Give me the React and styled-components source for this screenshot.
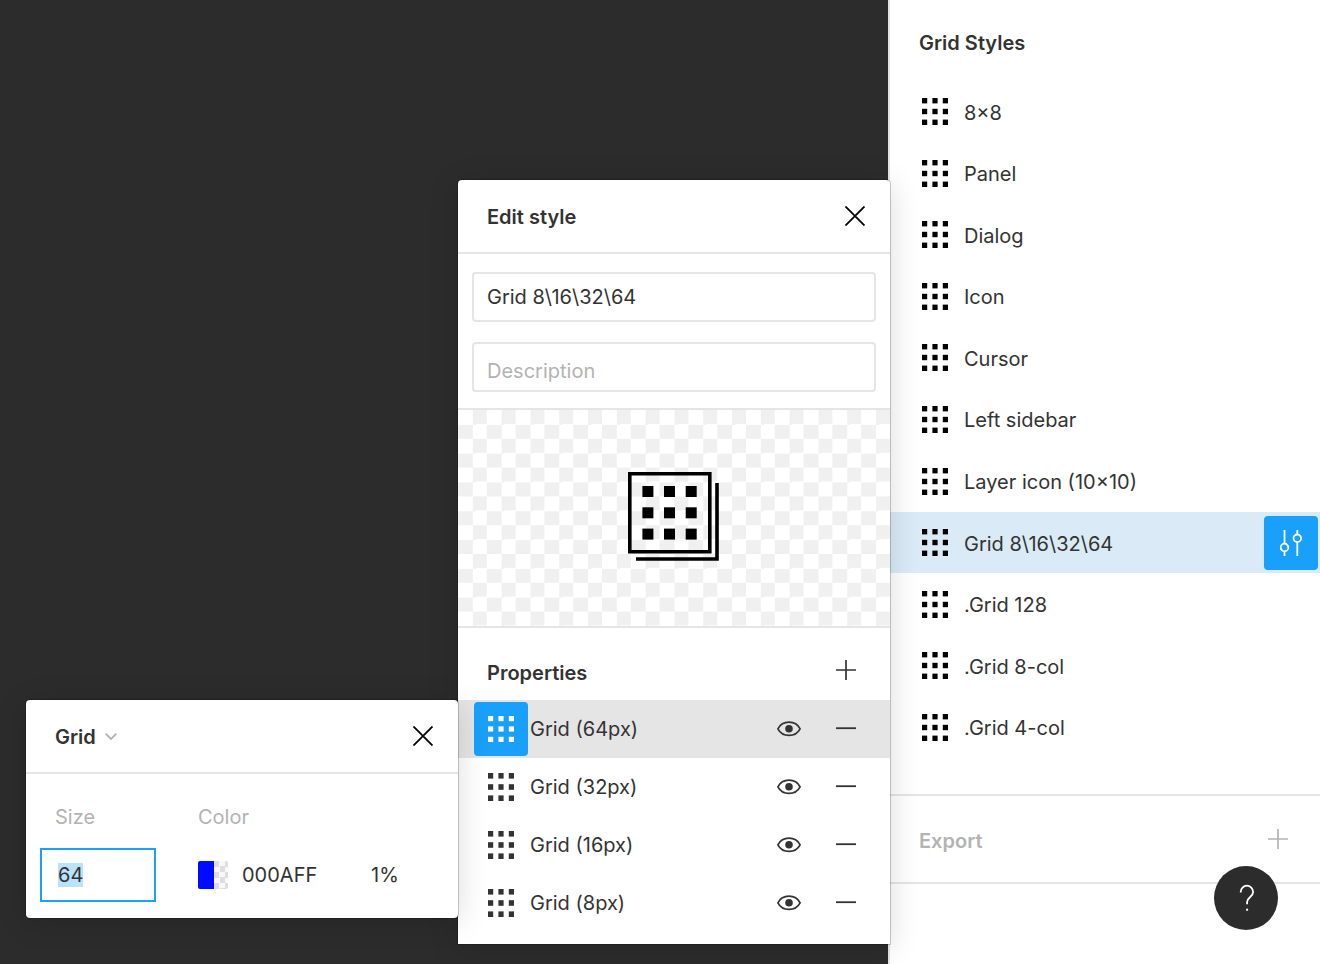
import React, { useEffect, useRef } from 'react';
import styled, { createGlobalStyle } from 'styled-components';

const gridStyles = [
  '8×8',
  'Panel',
  'Dialog',
  'Icon',
  'Cursor',
  'Left sidebar',
  'Layer icon (10×10)',
  'Grid 8\\16\\32\\64',
  '.Grid 128',
  '.Grid 8-col',
  '.Grid 4-col',
];

const properties = ['Grid (64px)', 'Grid (32px)', 'Grid (16px)', 'Grid (8px)'];

const GridIcon = ({ height = 27 }) => (
  <svg width="26" height={height} viewBox="0 0 26 26" preserveAspectRatio="none" fill="currentColor" aria-hidden="true">
    {[0, 10.4, 20.8].map(y => [0, 10.4, 20.8].map(x => (
      <rect key={`${x}-${y}`} x={x} y={y} width="5.2" height="5.2" />
    )))}
  </svg>
);

const CloseIcon = () => (
  <svg width="20" height="20" viewBox="0 0 20 20" fill="none" stroke="#000" strokeWidth="1.8" aria-hidden="true">
    <path d="M.5.5l19 19M19.5.5l-19 19" />
  </svg>
);

const PlusIcon = () => (
  <svg width="20" height="20" viewBox="0 0 20 20" fill="none" stroke="currentColor" strokeWidth="1.7" aria-hidden="true">
    <path d="M0 10h20M10 0v20" />
  </svg>
);

const MinusIcon = () => (
  <svg width="20" height="20" viewBox="0 0 20 20" fill="none" stroke="currentColor" strokeWidth="1.8" aria-hidden="true">
    <path d="M0 9.2h20" />
  </svg>
);

const EyeIcon = () => (
  <svg width="24" height="16" viewBox="0 0 24 16" fill="none" aria-hidden="true">
    <path d="M.9 7.8C3.2 3.400 7.300 1.200 12 1.200S20.800 3.400 23.100 7.800C20.800 12.200 16.700 14.400 12 14.400S3.200 12.200.9 7.800z" stroke="currentColor" strokeWidth="1.7" />
    <circle cx="12" cy="7.8" r="3.8" fill="currentColor" />
  </svg>
);

const ChevronIcon = () => (
  <svg width="12" height="8" viewBox="0 0 12 8" fill="none" stroke="#b3b3b3" strokeWidth="1.8" aria-hidden="true">
    <path d="M.6.6L6 6 11.4.6" />
  </svg>
);

const AdjustIcon = () => (
  <svg width="22" height="26" viewBox="0 0 22 26" fill="none" stroke="#fff" strokeWidth="1.8" aria-hidden="true">
    <path d="M4.5 0v13.7M4.5 21.3V26M17.3 0v4.5M17.3 12.1V26" />
    <circle cx="4.5" cy="17.5" r="3.8" />
    <circle cx="17.3" cy="8.3" r="3.8" />
  </svg>
);

const HelpIcon = () => (
  <svg width="16" height="28" viewBox="0 0 16 28" fill="none" aria-hidden="true">
    <path d="M2.700 8.500V7.900a6.200 6.200 0 0 1 12.400 0c0 5.200-6 5.400-6 10v2.300" stroke="#fff" strokeWidth="1.8" />
    <path d="M8.100 24.700h2v2h-2z" fill="#fff" />
  </svg>
);

const StylePreviewIcon = () => (
  <svg width="92" height="92" viewBox="0 0 92 92" fill="none" aria-hidden="true">
    <path d="M1.800 1.800h80v78h-80zM89 11v76H8" stroke="#000" strokeWidth="3.6" />
    {[14, 35.3, 56.6].map(y => [14.4, 36, 57.7].map(x => (
      <rect key={`${x}-${y}`} x={x} y={y} width="11" height="11" fill="#000" />
    )))}
  </svg>
);

const EditStyleDialog = () => (
  <EditDialog role="dialog" aria-label="Edit style">
    <DialogHeader>
      <Title>Edit style</Title>
      <IconButton aria-label="Close"><CloseIcon/></IconButton>
    </DialogHeader>
    <Fields>
      <TextField aria-label="Name" defaultValue={'Grid 8\\16\\32\\64'} />
      <TextField aria-label="Description" placeholder="Description" $low />
    </Fields>
    <Preview>
      <StylePreviewIcon/>
    </Preview>
    <PropertiesHeader>
      <PropertiesTitle>Properties</PropertiesTitle>
      <IconButton aria-label="Add property"><PlusIcon/></IconButton>
    </PropertiesHeader>
    <PropertyList>
      {properties.map((name, index) => (
        <PropertyItem key={name} $active={index === 0}>
          <PropertyButton aria-label={`Edit ${name}`} $active={index === 0}>
            <GridIcon height={index === 0 ? 26 : 28}/>
          </PropertyButton>
          <PropertyName>{name}</PropertyName>
          <IconButton aria-label="Toggle visibility"><EyeIcon/></IconButton>
          <IconButton aria-label="Remove property"><MinusIcon/></IconButton>
        </PropertyItem>
      ))}
    </PropertyList>
  </EditDialog>
);

const GridSettingsDialog = () => {
  const sizeRef = useRef(null);

  useEffect(() => {
    sizeRef.current.focus();
    sizeRef.current.select();
  }, []);

  return (
    <GridDialog role="dialog" aria-label="Grid">
      <DialogHeader>
        <TypeButton>Grid<ChevronIcon/></TypeButton>
        <IconButton aria-label="Close"><CloseIcon/></IconButton>
      </DialogHeader>
      <Settings>
        <SettingLabel htmlFor="size">Size</SettingLabel>
        <SettingLabel htmlFor="color">Color</SettingLabel>
        <SizeInput id="size" ref={sizeRef} defaultValue="64" />
        <ColorRow>
          <Swatch aria-label="Pick color"/>
          <ColorInput id="color" defaultValue="000AFF" />
          <OpacityInput aria-label="Opacity" defaultValue="1%" />
        </ColorRow>
      </Settings>
    </GridDialog>
  );
};

const App = () => (
  <>
    <GlobalStyle/>
    <Page>
      <Canvas/>
      <Sidebar>
        <SidebarTitle>Grid Styles</SidebarTitle>
        <StyleList>
          {gridStyles.map((name, index) => (
            <StyleItem key={name} $active={index === 7}>
              <GridIcon/>
              <StyleName>{name}</StyleName>
              {index === 7 && <AdjustButton aria-label="Edit style"><AdjustIcon/></AdjustButton>}
            </StyleItem>
          ))}
        </StyleList>
        <ExportSection>
          <ExportTitle $muted>Export</ExportTitle>
          <IconButton aria-label="Add export" $muted><PlusIcon/></IconButton>
        </ExportSection>
      </Sidebar>
      <EditStyleDialog/>
      <GridSettingsDialog/>
      <HelpButton aria-label="Help"><HelpIcon/></HelpButton>
    </Page>
  </>
);

export default App;

const GlobalStyle = createGlobalStyle`
  * {
    box-sizing: border-box;
  }
  body {
    margin: 0;
    font-family: Inter, "Liberation Sans", sans-serif;
    font-size: 20px;
    line-height: 24px;
    color: #333333;
  }
  button, input {
    margin: 0;
    padding: 0;
    border: none;
    background: none;
    font: inherit;
    color: inherit;
    outline: none;
  }
  svg {
    display: block;
    flex: none;
  }
`;

const Page = styled.div`
  position: relative;
  display: flex;
  min-height: 100vh;
  overflow: hidden;
`;

const Canvas = styled.main`
  flex: 1;
  background-color: #2c2c2c;
`;

const Sidebar = styled.aside`
  width: 432px;
  border-left: 2px solid #e5e5e5;
  background-color: #ffffff;
`;

const Title = styled.h2`
  margin: 0;
  padding-top: 2px;
  font-size: 20px;
  font-weight: 600;
  color: ${props => props.$muted ? '#b3b3b3' : '#333333'};
`;

const SidebarTitle = styled(Title)`
  padding: 31px 29px 26px;
`;

const PropertiesTitle = styled(Title)`
  padding-top: 6px;
`;

const ExportTitle = styled(Title)`
  padding-top: 4px;
`;

const StyleList = styled.ul`
  display: grid;
  grid-auto-rows: 1fr;
  min-height: 677px;
  margin: 0;
  padding: 0;
  list-style: none;
`;

const StyleItem = styled.li`
  display: flex;
  align-items: center;
  gap: 16px;
  padding: 0 2px 0 32px;
  background-color: ${props => props.$active ? '#daebf7' : 'transparent'};
  & > svg {
    color: #000000;
  }
`;

const StyleName = styled.span`
  flex: 1;
  padding-top: 2px;
`;

const AdjustButton = styled.button`
  display: flex;
  align-items: center;
  justify-content: center;
  width: 54px;
  height: 54px;
  border-radius: 4px;
  background-color: #18a0fb;
`;

const ExportSection = styled.section`
  display: flex;
  align-items: center;
  justify-content: space-between;
  height: 90px;
  margin-top: 36px;
  padding: 0 22px 0 29px;
  border-top: 2px solid #e5e5e5;
  border-bottom: 2px solid #e5e5e5;
`;

const IconButton = styled.button`
  display: flex;
  align-items: center;
  justify-content: center;
  width: 40px;
  height: 40px;
  color: ${props => props.$muted ? '#b3b3b3' : '#333333'};
`;

const Dialog = styled.section`
  position: absolute;
  width: 432px;
  border-radius: 4px;
  background-color: #ffffff;
  box-shadow: 0 0 0 1px rgba(0, 0, 0, 0.2), 0 4px 30px rgba(0, 0, 0, 0.15);
`;

const EditDialog = styled(Dialog)`
  top: 180px;
  right: 430px;
  padding-bottom: 12px;
  border-radius: 4px 4px 0 0;
`;

const GridDialog = styled(Dialog)`
  top: 700px;
  right: 862px;
`;

const DialogHeader = styled.header`
  display: flex;
  align-items: center;
  justify-content: space-between;
  height: 74px;
  padding: 0 15px 0 29px;
  border-bottom: 2px solid #e5e5e5;
`;

const Fields = styled.div`
  display: flex;
  flex-direction: column;
  gap: 20px;
  padding: 18px 14px 16px;
`;

const TextField = styled.input`
  width: 100%;
  height: 50px;
  padding: ${props => props.$low ? '8px 13px 0' : '0 13px'};
  border: 2px solid #e5e5e5;
  border-radius: 4px;
  &::placeholder {
    color: #b3b3b3;
    opacity: 1;
  }
`;

const Preview = styled.div`
  display: flex;
  align-items: center;
  justify-content: center;
  height: 220px;
  border-top: 2px solid #e5e5e5;
  border-bottom: 2px solid #e5e5e5;
  background-image: conic-gradient(#f0f0f0 25%, #ffffff 0 50%, #f0f0f0 0 75%, #ffffff 0);
  background-size: calc(100% / 15) calc(200% / 15);
`;

const PropertiesHeader = styled.header`
  display: flex;
  align-items: center;
  justify-content: space-between;
  height: 72px;
  padding: 12px 24px 0 29px;
`;

const PropertyList = styled.ul`
  margin: 0;
  padding: 0;
  list-style: none;
`;

const PropertyItem = styled.li`
  display: flex;
  align-items: center;
  height: 58px;
  padding: 0 24px 0 16px;
  background-color: ${props => props.$active ? '#e5e5e5' : 'transparent'};
  & > ${IconButton} + ${IconButton} {
    margin-left: 17px;
  }
`;

const PropertyButton = styled.button`
  display: flex;
  align-items: center;
  justify-content: center;
  width: 54px;
  height: 54px;
  border-radius: 4px;
  background-color: ${props => props.$active ? '#18a0fb' : 'transparent'};
  color: ${props => props.$active ? '#ffffff' : '#333333'};
`;

const PropertyName = styled.span`
  flex: 1;
  padding-left: 2px;
`;

const TypeButton = styled.button`
  display: flex;
  align-items: center;
  gap: 9px;
  padding-top: 2px;
  font-weight: 600;
`;

const Settings = styled.div`
  display: grid;
  grid-template-columns: 116px 1fr;
  column-gap: 42px;
  row-gap: 19px;
  padding: 31px 14px 16px;
`;

const SettingLabel = styled.label`
  color: #b3b3b3;
  &:first-child {
    padding-left: 15px;
  }
`;

const SizeInput = styled.input`
  width: 100%;
  height: 54px;
  padding: 0 16px;
  border: 2px solid #18a0fb;
  &::selection {
    background-color: #b9e2fe;
    color: #333333;
  }
`;

const ColorRow = styled.div`
  display: flex;
  align-items: center;
`;

const Swatch = styled.button`
  width: 30px;
  height: 28px;
  border-radius: 2px;
  background-image:
    linear-gradient(#000aff, #000aff),
    conic-gradient(#f8f8fb 25%, #dedee2 0 50%, #f8f8fb 0 75%, #dedee2 0);
  background-size: 16px 100%, 11px 11px;
  background-position: 0 0, 16px 0;
  background-repeat: no-repeat, repeat;
`;

const ColorInput = styled.input`
  width: 100px;
  margin-left: 14px;
`;

const OpacityInput = styled.input`
  width: 40px;
  margin-left: 29px;
`;

const HelpButton = styled.button`
  position: absolute;
  right: 42px;
  bottom: 34px;
  display: flex;
  align-items: center;
  justify-content: center;
  width: 64px;
  height: 64px;
  border-radius: 50%;
  background-color: #2c2c2c;
`;
